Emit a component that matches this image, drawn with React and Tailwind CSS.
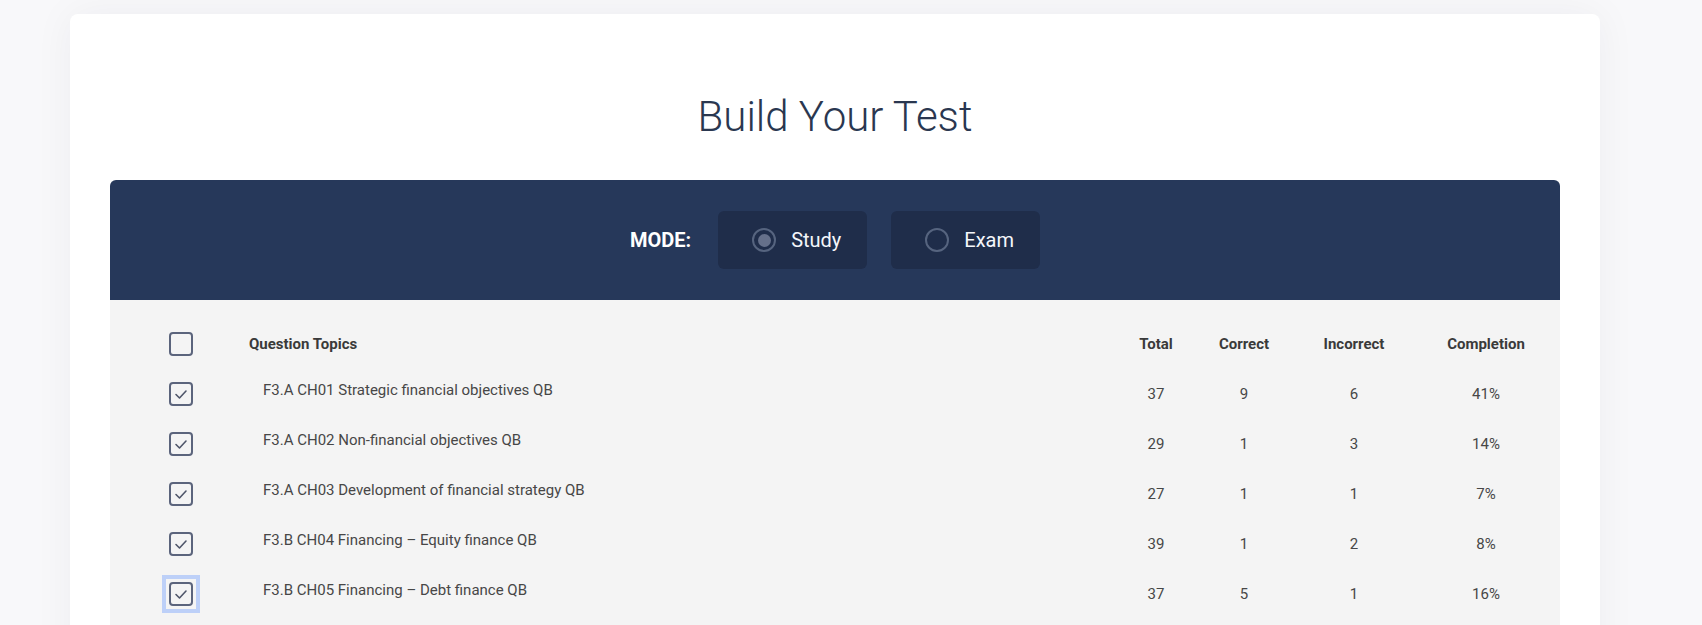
import React, { useState } from "react";

const topics = [
  { id: 1, name: "F3.A CH01 Strategic financial objectives QB", total: 37, correct: 9, incorrect: 6, completion: "41%" },
  { id: 2, name: "F3.A CH02 Non-financial objectives QB", total: 29, correct: 1, incorrect: 3, completion: "14%" },
  { id: 3, name: "F3.A CH03 Development of financial strategy QB", total: 27, correct: 1, incorrect: 1, completion: "7%" },
  { id: 4, name: "F3.B CH04 Financing – Equity finance QB", total: 39, correct: 1, incorrect: 2, completion: "8%" },
  { id: 5, name: "F3.B CH05 Financing – Debt finance QB", total: 37, correct: 5, incorrect: 1, completion: "16%" },
];

const Checkbox = ({ checked, focused }) => {
  const box = (
    <span className="flex h-[24px] w-[24px] items-center justify-center rounded-[4px] border-2 border-[#5b647c] bg-[#f4f4f4]">
      {checked && (
        <svg viewBox="0 0 20 20" className="h-[20px] w-[20px]" fill="none">
          <path d="M5 10.5l3.5 3.5 6.5-7" stroke="#4f566a" strokeWidth="1.6" strokeLinecap="round" strokeLinejoin="round" />
        </svg>
      )}
    </span>
  );

  if (!focused) return box;

  return <span className="-m-[3px] inline-flex p-[3px] ring-4 ring-[#bdd0f8]">{box}</span>;
};

const ModeOption = ({ label, active, onClick }) => (
  <button
    onClick={onClick}
    className="flex h-[58px] items-center gap-[15px] rounded-[6px] bg-[#1f2d4a] pl-[34px] pr-[26px]"
  >
    <span className="flex h-[24px] w-[24px] items-center justify-center rounded-full border-2 border-[#56647f]">
      {active && <span className="h-[13px] w-[13px] rounded-full bg-[#65708a]" />}
    </span>
    <span className="text-[20px] text-[#f4f6fa]">{label}</span>
  </button>
);

const App = () => {
  const [mode, setMode] = useState("study");

  return (
    <div className="min-h-screen bg-[#f8f8fa] pt-[14px] font-['Roboto',sans-serif]">
      <div className="ml-[70px] w-[1530px] rounded-[8px] bg-white px-[40px] pt-[77px] pb-10 shadow-[0_0_40px_rgba(20,20,60,0.05)]">
        {/* Header */}
        <h1 className="mb-[37px] text-center text-[42px] leading-[52px] font-light text-[#2a3750]">
          Build Your Test
        </h1>

        {/* Mode */}
        <div className="flex h-[120px] items-center justify-center rounded-t-[6px] bg-[#26385a]">
          <span className="mr-[27px] text-[20px] font-bold text-white">MODE:</span>
          <div className="flex gap-[24px]">
            <ModeOption label="Study" active={mode === "study"} onClick={() => setMode("study")} />
            <ModeOption label="Exam" active={mode === "exam"} onClick={() => setMode("exam")} />
          </div>
        </div>

        {/* Topics table */}
        <div className="bg-[#f4f4f4] pt-[19px] pr-[8px] pb-6 text-[15px]">
          <div className="grid h-[50px] grid-cols-[139px_1fr_88px_88px_132px_132px] items-center font-bold text-[#3a3a3a]">
            <div className="flex pl-[59px]">
              <Checkbox />
            </div>
            <div>Question Topics</div>
            <div className="text-center">Total</div>
            <div className="text-center">Correct</div>
            <div className="text-center">Incorrect</div>
            <div className="text-center">Completion</div>
          </div>

          {topics.map((t, i) => (
            <div
              key={t.id}
              className="grid h-[50px] grid-cols-[139px_1fr_88px_88px_132px_132px] items-center text-[#474747]"
            >
              <div className="flex pl-[59px]">
                <Checkbox checked focused={i === topics.length - 1} />
              </div>
              <div className="pb-[7px] pl-[14px]">{t.name}</div>
              <div className="text-center">{t.total}</div>
              <div className="text-center">{t.correct}</div>
              <div className="text-center">{t.incorrect}</div>
              <div className="text-center">{t.completion}</div>
            </div>
          ))}
        </div>
      </div>
    </div>
  );
};

export default App;
